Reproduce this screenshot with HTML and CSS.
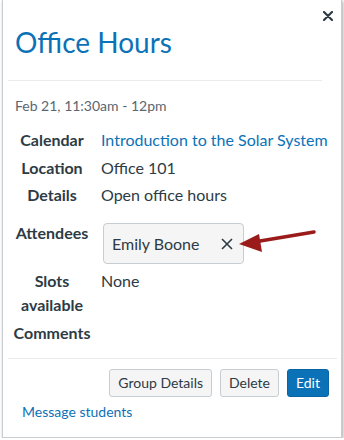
FILE: index.html
```html
<!DOCTYPE html>
<html lang="en">
<head>
    <meta charset="UTF-8">
    <meta name="viewport" content="width=device-width, initial-scale=1.0">
    <title>Office Hours</title>
    <link rel="stylesheet" href="styles.css">
</head>
<body>
    <div class="popover">
        <button class="close" type="button" aria-label="Close">
            <svg width="10" height="10" viewBox="0 0 10 10"><path d="M1 1L9 9M9 1L1 9" stroke="#2d3b45" stroke-width="2.2" stroke-linecap="round"/></svg>
        </button>
        <h1 class="title">Office Hours</h1>
        <hr class="sep sep-top">
        <div class="when">Feb 21, 11:30am - 12pm</div>

        <div class="details">
            <div class="label">Calendar</div>
            <div class="value"><a href="#">Introduction to the Solar System</a></div>

            <div class="label">Location</div>
            <div class="value">Office 101</div>

            <div class="label">Details</div>
            <div class="value">Open office hours</div>

            <div class="label attendees">Attendees</div>
            <div class="value attendees">
                <span class="chip">Emily Boone
                    <svg class="chip-x" width="12" height="12" viewBox="0 0 12 12"><path d="M1 1L11 11M11 1L1 11" stroke="#2d3b45" stroke-width="1.6"/></svg>
                </span>
            </div>

            <div class="label">Slots<br>available</div>
            <div class="value">None</div>

            <div class="label">Comments</div>
            <div class="value"></div>
        </div>

        <hr class="sep sep-bottom">
        <div class="actions">
            <button class="btn" type="button">Group Details</button>
            <button class="btn" type="button">Delete</button>
            <button class="btn btn-primary" type="button">Edit</button>
        </div>
        <a class="message" href="#">Message students</a>

        <svg class="arrow" width="80" height="26" viewBox="0 0 80 26">
            <path d="M16 14L76 4" stroke="#9b1b1b" stroke-width="3.5" stroke-linecap="round"/>
            <path d="M1 16L21 6L24 24Z" fill="#9b1b1b"/>
        </svg>
    </div>
</body>
</html>
```

FILE: styles.css
```css
body { margin: 0; font-family: Lato, "Open Sans", sans-serif; color: #2d3b45; background: #fff; }
.popover { position: relative; box-sizing: border-box; width: 340px; height: 438px; margin-left: 2px; padding: 0 11px 0 12px; background: #fff; border: 1px solid #c7cdd1; border-top: none; box-shadow: 1px 1px 3px rgba(0, 0, 0, 0.35); }
.close { position: absolute; top: 11px; right: 8px; padding: 0; border: none; background: none; width: 10px; height: 10px; line-height: 0; cursor: pointer; }
.title { margin: 0; padding-top: 23px; font-size: 28px; font-weight: 400; line-height: 38px; color: #0b72b7; }
.sep { height: 0; margin: 0 -7px; border: none; border-top: 1px solid #e9ebec; }
.sep-top { margin-top: 19px; margin-right: 8px; }
.sep-bottom { margin-top: 13px; }
.when { margin-top: 15px; font-size: 14px; line-height: 20px; color: #5a6670; }
.details { display: grid; grid-template-columns: 78px 1fr; column-gap: 10px; row-gap: 3.5px; margin-top: 12px; margin-left: -2px; font-size: 16px; line-height: 24px; }
.label { font-weight: 700; text-align: center; }
.value a { color: #0b72b7; text-decoration: none; }
.attendees { margin-top: 10.5px; }
.chip { display: inline-flex; align-items: center; box-sizing: border-box; height: 41px; margin: 2px 0 1.5px 2px; padding: 0 10px 0 8px; gap: 21px; background: #f5f5f5; border: 1px solid #c7cdd1; border-radius: 4px; vertical-align: top; }
.actions { display: flex; justify-content: flex-end; gap: 8px; margin-top: 10px; padding-right: 1px; }
.btn { height: 28px; padding: 0 8px; font-family: inherit; font-size: 14px; color: #2d3b45; background: #f5f5f5; border: 1px solid #c7cdd1; border-radius: 3px; cursor: pointer; }
.btn-primary { background: #0b72b7; border-color: #0a64a3; color: #fff; padding: 0 8px; }
.message { display: block; margin-top: 5px; margin-left: 7px; font-size: 14px; line-height: 20px; color: #0b72b7; text-decoration: none; }
.arrow { position: absolute; left: 235px; top: 228px; }
```
